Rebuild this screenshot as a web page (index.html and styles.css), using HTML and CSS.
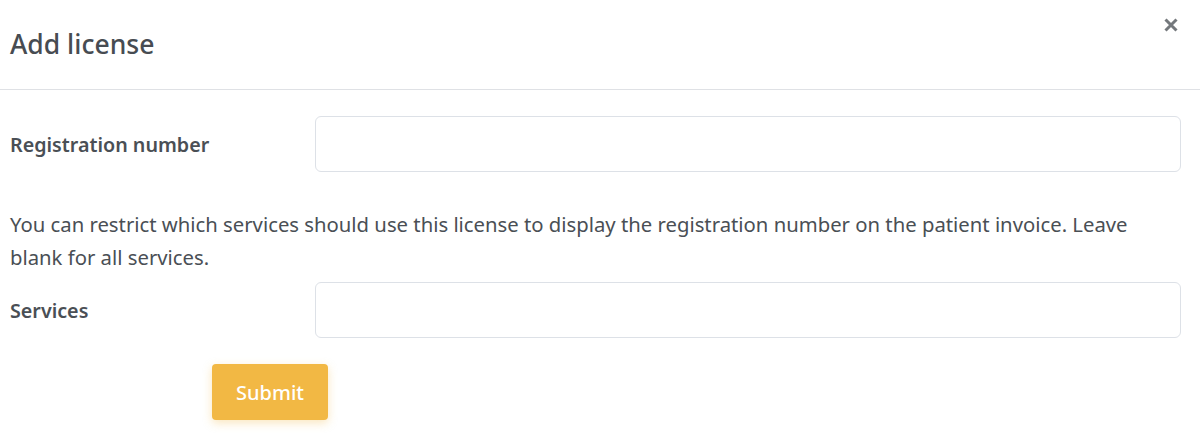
FILE: index.html
```html
<!DOCTYPE html>
<html>
<head>
<meta charset="utf-8">
<link rel="stylesheet" href="styles.css">
</head>
<body>
<div class="modal">
  <div class="modal-header">
    <h1 class="title">Add license</h1>
    <button class="close" type="button" aria-label="Close">
      <svg width="16" height="16" viewBox="0 0 16 16"><path d="M2.5 2.5L13.5 13.5M13.5 2.5L2.5 13.5" stroke="#74787c" stroke-width="3" stroke-linecap="butt"/></svg>
    </button>
  </div>
  <div class="modal-body">
    <div class="row row-first">
      <label class="label">Registration number</label>
      <div class="field"><input class="input" type="text"></div>
    </div>
    <p class="help">You can restrict which services should use this license to display the registration number on the patient invoice. Leave blank for all services.</p>
    <div class="row">
      <label class="label">Services</label>
      <div class="field"><input class="input" type="text"></div>
    </div>
    <div class="actions">
      <button class="submit" type="button">Submit</button>
    </div>
  </div>
</div>
</body>
</html>
```

FILE: styles.css
```css
html, body {
  margin: 0;
  padding: 0;
  background: #ffffff;
}
body {
  font-family: "Noto Sans", "Open Sans", sans-serif;
  color: #4a4f55;
}
.modal {
  width: 1200px;
}
.modal-header {
  height: 90px;
  border-bottom: 1px solid #dfe1e5;
  display: flex;
  align-items: flex-start;
  justify-content: space-between;
  padding: 0 10px;
  box-sizing: border-box;
}
.title {
  margin: 0;
  padding-top: 28px;
  font-size: 26.5px;
  font-weight: 500;
  line-height: 32px;
  color: #474c52;
}
.close {
  background: none;
  border: 0;
  padding: 0;
  margin-top: 17px;
  margin-right: 11px;
  width: 16px;
  height: 16px;
  cursor: pointer;
}
.close svg { display: block; }
.modal-body {
  padding: 26px 19px 0 10px;
}
.row {
  display: flex;
  align-items: center;
}
.label {
  width: 305px;
  font-size: 19.7px;
  font-weight: 600;
  color: #4a4f55;
}
.field {
  flex: 1;
}
.input {
  display: block;
  width: 100%;
  box-sizing: border-box;
  height: 56px;
  border: 1px solid #dde1e7;
  border-radius: 6px;
  background: #fff;
  font: inherit;
}
.help {
  margin: 36px 0 8px;
  max-width: 1150px;
  font-size: 20.3px;
  line-height: 33px;
  color: #4a4f55;
}
.actions {
  padding: 26px 0 20px 202px;
}
.submit {
  width: 116px;
  height: 56px;
  border: 0;
  border-radius: 4px;
  background: #f2b844;
  color: #ffffff;
  font-family: inherit;
  font-size: 20px;
  font-weight: 500;
  box-shadow: 0 3px 10px rgba(242, 184, 68, 0.35);
}
```
